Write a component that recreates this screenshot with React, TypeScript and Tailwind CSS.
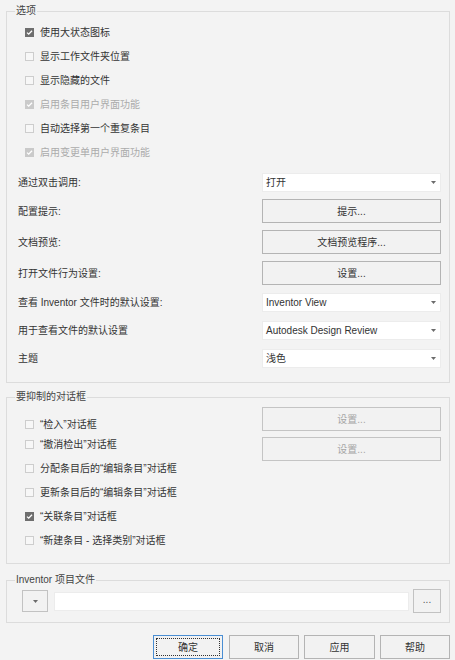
import React from 'react'

type Check = { label: string; checked?: boolean; disabled?: boolean }

const TOP_CHECKS: Check[] = [
  { label: '使用大状态图标', checked: true },
  { label: '显示工作文件夹位置' },
  { label: '显示隐藏的文件' },
  { label: '启用条目用户界面功能', checked: true, disabled: true },
  { label: '自动选择第一个重复条目' },
  { label: '启用变更单用户界面功能', checked: true, disabled: true },
]

const DIALOG_CHECKS: Check[] = [
  { label: '“检入”对话框' },
  { label: '“撤消检出”对话框' },
  { label: '分配条目后的“编辑条目”对话框' },
  { label: '更新条目后的“编辑条目”对话框' },
  { label: '“关联条目”对话框', checked: true },
  { label: '“新建条目 - 选择类别”对话框' },
]

function Box({ checked, disabled }: { checked?: boolean; disabled?: boolean }) {
  if (checked) {
    return (
      <span className={`flex w-[9px] h-[9px] shrink-0 items-center justify-center ${disabled ? 'bg-[#cacaca]' : 'bg-[#6e6e6e]'}`}>
        <svg width="9" height="9" viewBox="0 0 9 9">
          <path d="M2 4.6 L3.7 6.2 L7 2.7" fill="none" stroke="#fff" strokeWidth="1.3" />
        </svg>
      </span>
    )
  }
  return <span className="block w-[9px] h-[9px] shrink-0 border border-[#cdcdcd] bg-[#f7f7f7]" />
}

function CheckRow({ c, h }: { c: Check; h: string }) {
  return (
    <div className={`flex items-center gap-[6px] ${h}`}>
      <Box checked={c.checked} disabled={c.disabled} />
      <span className={c.disabled ? 'text-[#ababab]' : 'text-[#333]'}>{c.label}</span>
    </div>
  )
}

function Arrow() {
  return (
    <svg width="5" height="3" viewBox="0 0 5 3">
      <path d="M0 0 H5 L2.5 3 Z" fill="#6b6b6b" />
    </svg>
  )
}

function Select({ value }: { value: string }) {
  return (
    <div className="flex items-center justify-between w-[179px] h-[19px] bg-white border border-[#ececec] pl-[3px] pr-[4px] text-[#333]">
      <span>{value}</span>
      <Arrow />
    </div>
  )
}

function Btn({ label, disabled, className = '' }: { label: string; disabled?: boolean; className?: string }) {
  return (
    <button
      className={`flex items-center justify-center h-[24px] bg-[#f2f2f2] border ${disabled ? 'border-[#c4c4c4] text-[#a6a6a6]' : 'border-[#b4b4b4] text-[#333]'} ${className}`}
    >
      {label}
    </button>
  )
}

function FormRow({ label, mt, children }: { label: string; mt: string; children: React.ReactNode }) {
  return (
    <div className={`flex items-center justify-between ${mt}`}>
      <span className="text-[#333]">{label}</span>
      {children}
    </div>
  )
}

function Legend({ text }: { text: string }) {
  return <legend className="ml-[8px] px-[1px] leading-[14px] text-[#444]">{text}</legend>
}

export default function App() {
  return (
    <div className="w-[455px] h-[660px] bg-[#f3f3f3] pl-[6px] pr-[5px] pt-[4px] text-[10px] font-['Liberation_Sans','Noto_Sans_CJK_SC',sans-serif] overflow-hidden">
      {/* 选项 */}
      <fieldset className="border border-[#dcdcdc]">
        <Legend text="选项" />
        <div className="pl-[11px] pr-[8px] pb-[14px]">
          <div className="pl-[7px] mt-[2px]">
            {TOP_CHECKS.map(c => (
              <CheckRow key={c.label} c={c} h="h-[24px]" />
            ))}
          </div>
          <FormRow label="通过双击调用:" mt="mt-[9px]">
            <Select value="打开" />
          </FormRow>
          <FormRow label="配置提示:" mt="mt-[7px]">
            <Btn label="提示..." className="w-[179px]" />
          </FormRow>
          <FormRow label="文档预览:" mt="mt-[7px]">
            <Btn label="文档预览程序..." className="w-[179px]" />
          </FormRow>
          <FormRow label="打开文件行为设置:" mt="mt-[7px]">
            <Btn label="设置..." className="w-[179px]" />
          </FormRow>
          <FormRow label="查看 Inventor 文件时的默认设置:" mt="mt-[8px]">
            <Select value="Inventor View" />
          </FormRow>
          <FormRow label="用于查看文件的默认设置" mt="mt-[9px]">
            <Select value="Autodesk Design Review" />
          </FormRow>
          <FormRow label="主题" mt="mt-[9px]">
            <Select value="浅色" />
          </FormRow>
        </div>
      </fieldset>

      {/* 要抑制的对话框 */}
      <fieldset className="border border-[#dcdcdc] mt-[7px]">
        <Legend text="要抑制的对话框" />
        <div className="flex justify-between pl-[18px] pr-[8px] pb-[11px]">
          <div className="mt-[10px]">
            {DIALOG_CHECKS.map((c, i) => (
              <CheckRow key={c.label} c={c} h={i < 2 ? 'h-[20px]' : i === 2 ? 'h-[24px] mt-[2px]' : 'h-[24px]'} />
            ))}
          </div>
          <div className="flex flex-col gap-[6px] mt-[3px]">
            <Btn label="设置..." disabled className="w-[179px]" />
            <Btn label="设置..." disabled className="w-[179px]" />
          </div>
        </div>
      </fieldset>

      {/* Inventor 项目文件 */}
      <fieldset className="border border-[#dcdcdc] mt-[9px]">
        <Legend text="Inventor 项目文件" />
        <div className="flex items-center h-[24px] mt-[2px] mb-[9px] pl-[15px] pr-[8px]">
          <button className="flex items-center justify-center w-[26px] h-[22px] border border-[#c2c2c2] bg-[#f2f2f2]">
            <Arrow />
          </button>
          <div className="ml-[6px] w-[355px] h-[19px] bg-white border border-[#ececec]" />
          <button className="ml-auto flex items-center justify-center w-[28px] h-[24px] border border-[#c2c2c2] bg-[#f2f2f2] text-[#555] leading-none pb-[3px]">
            ...
          </button>
        </div>
      </fieldset>

      {/* Dialog buttons */}
      <div className="flex justify-end gap-[5px] mt-[12px]">
        <button className="w-[70px] h-[24px] p-[2px] border border-[#4a8ed3] bg-[#f2f2f2] text-[#333]">
          <span className="flex h-full w-full items-center justify-center border border-dotted border-[#333]">确定</span>
        </button>
        <Btn label="取消" className="w-[70px] ml-[1px]" />
        <Btn label="应用" className="w-[71px]" />
        <Btn label="帮助" className="w-[70px]" />
      </div>
    </div>
  )
}
